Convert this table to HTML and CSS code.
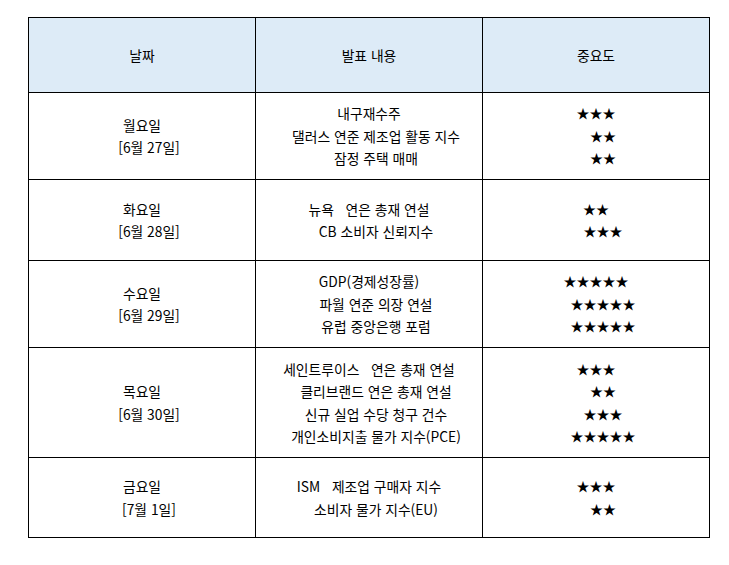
FILE: index.html
```html
<!DOCTYPE html>
<html lang="ko">
<head>
<meta charset="utf-8">
<link rel="stylesheet" href="styles.css">
</head>
<body>
<table class="sched">
  <thead>
    <tr class="r-head">
      <th>날짜</th>
      <th>발표 내용</th>
      <th>중요도</th>
    </tr>
  </thead>
  <tbody>
    <tr class="r-87">
      <td><div class="ln">월요일</div><div class="ln in">[6월 27일]</div></td>
      <td><div class="ln">내구재수주</div><div class="ln in">댈러스 연준 제조업 활동 지수</div><div class="ln in">잠정 주택 매매</div></td>
      <td class="stars"><div class="ln">★★★</div><div class="ln in">★★</div><div class="ln in">★★</div></td>
    </tr>
    <tr class="r-81">
      <td><div class="ln">화요일</div><div class="ln in">[6월 28일]</div></td>
      <td><div class="ln">뉴욕&nbsp;&nbsp;&nbsp;연은 총재 연설</div><div class="ln in">CB 소비자 신뢰지수</div></td>
      <td class="stars"><div class="ln">★★</div><div class="ln in">★★★</div></td>
    </tr>
    <tr class="r-87">
      <td><div class="ln">수요일</div><div class="ln in">[6월 29일]</div></td>
      <td><div class="ln">GDP(경제성장률)</div><div class="ln in">파월 연준 의장 연설</div><div class="ln in">유럽 중앙은행 포럼</div></td>
      <td class="stars"><div class="ln">★★★★★</div><div class="ln in">★★★★★</div><div class="ln in">★★★★★</div></td>
    </tr>
    <tr class="r-110">
      <td><div class="ln">목요일</div><div class="ln in">[6월 30일]</div></td>
      <td><div class="ln">세인트루이스&nbsp;&nbsp;&nbsp;연은 총재 연설</div><div class="ln in">클리브랜드 연은 총재 연설</div><div class="ln in">신규 실업 수당 청구 건수</div><div class="ln in">개인소비지출 물가 지수(PCE)</div></td>
      <td class="stars"><div class="ln">★★★</div><div class="ln in">★★</div><div class="ln in">★★★</div><div class="ln in">★★★★★</div></td>
    </tr>
    <tr class="r-80">
      <td><div class="ln">금요일</div><div class="ln in">[7월 1일]</div></td>
      <td><div class="ln">ISM&nbsp;&nbsp;&nbsp;제조업 구매자 지수</div><div class="ln in">소비자 물가 지수(EU)</div></td>
      <td class="stars"><div class="ln">★★★</div><div class="ln in">★★</div></td>
    </tr>
  </tbody>
</table>
</body>
</html>
```
FILE: styles.css
```css
html, body {
  margin: 0;
  padding: 0;
  background: #ffffff;
}
body {
  padding: 17px 0 0 28px;
  font-family: "Noto Sans CJK KR", "Noto Sans", sans-serif;
  font-size: 13.8px;
  color: #000000;
}
.sched {
  border-collapse: collapse;
  table-layout: fixed;
}
.sched th,
.sched td {
  border: 1px solid #000000;
  width: 226px;
  padding: 0;
  text-align: center;
  vertical-align: middle;
  font-weight: normal;
}
.sched th {
  background: #ddebf7;
}
.sched .stars {
  font-size: 13px;
}
.r-head { height: 75px; }
.r-87 { height: 87px; }
.r-81 { height: 81px; }
.r-110 { height: 110px; }
.r-80 { height: 80px; }
.ln {
  line-height: 22.5px;
  white-space: nowrap;
}
.ln.in {
  padding-left: 14px;
}
```
